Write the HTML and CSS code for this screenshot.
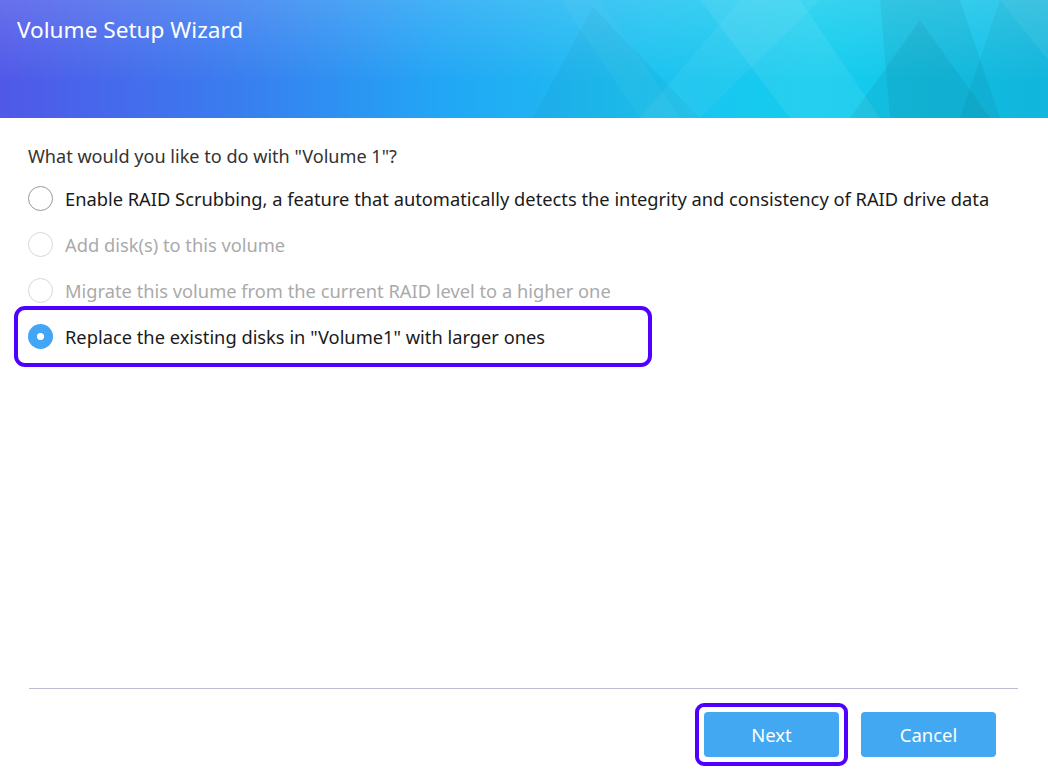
FILE: index.html
```html
<!doctype html>
<html lang="en">
<head>
	<meta charset="utf-8">
	<title>Volume Setup Wizard</title>
	<link rel="stylesheet" href="styles.css">
</head>
<body>
	<div class="wizard">
		<header class="wizard-head">
			<svg class="wizard-pattern" viewBox="0 0 1048 118" preserveAspectRatio="none">
				<polygon points="593,7 533,118 700,118" fill="#000" opacity=".03"/>
				<polygon points="560,0 600,0 680,118 640,118" fill="#fff" opacity=".03"/>
				<polygon points="700,0 800,0 880,118 790,118" fill="#fff" opacity=".07"/>
				<polygon points="740,0 820,0 700,118 640,118" fill="#fff" opacity=".05"/>
				<polygon points="880,0 960,0 1000,118 890,118" fill="#000" opacity=".05"/>
				<polygon points="920,20 850,118 990,118" fill="#000" opacity=".05"/>
				<polygon points="1000,0 1048,0 1048,118 960,118" fill="#000" opacity=".04"/>
				<polygon points="1000,0 1048,60 1048,0" fill="#fff" opacity=".06"/>
			</svg>
			<h1 class="wizard-title">Volume Setup Wizard</h1>
		</header>

		<main class="wizard-body">
			<p class="question">What would you like to do with "Volume 1"?</p>
			<ul class="options">
				<li class="option">
					<span class="radio"></span>
					<span class="option-text">Enable RAID Scrubbing, a feature that automatically detects the integrity and consistency of RAID drive data</span>
				</li>
				<li class="option option-disabled">
					<span class="radio"></span>
					<span class="option-text">Add disk(s) to this volume</span>
				</li>
				<li class="option option-disabled">
					<span class="radio"></span>
					<span class="option-text">Migrate this volume from the current RAID level to a higher one</span>
				</li>
				<li class="option option-checked">
					<span class="radio"></span>
					<span class="option-text">Replace the existing disks in "Volume1" with larger ones</span>
					<span class="mark mark-option"></span>
				</li>
			</ul>
		</main>

		<footer class="wizard-foot">
			<div class="buttons">
				<button class="btn" type="button">Next<span class="mark mark-btn"></span></button>
				<button class="btn" type="button">Cancel</button>
			</div>
		</footer>
	</div>
</body>
</html>
```

FILE: styles.css
```css
* {
	box-sizing: border-box;
}
html, body {
	margin: 0;
	height: 100%;
}
body {
	font-family: "Noto Sans", "Open Sans", sans-serif;
	color: #333;
	background: #fff;
}

.wizard {
	display: flex;
	flex-direction: column;
	min-height: 100vh;
}

/* header */
.wizard-head {
	position: relative;
	height: 118px;
	overflow: hidden;
	background:
		linear-gradient(180deg, rgba(255,255,255,.14) 0%, rgba(255,255,255,0) 70%),
		linear-gradient(90deg, #5058e8 0%, #3a7cef 22%, #22a6f5 42%, #1cc2f0 62%, #14cdee 78%, #12bde6 100%);
}
.wizard-pattern {
	position: absolute;
	left: 0;
	top: 0;
	width: 100%;
	height: 100%;
}
.wizard-title {
	position: relative;
	margin: 0;
	padding: 14px 0 0 17px;
	font-size: 22.6px;
	font-weight: 400;
	color: #fff;
	line-height: 32px;
}

/* body */
.wizard-body {
	flex: 1;
	padding: 26px 28px 0;
}
.question {
	margin: 0 0 6px;
	font-size: 18.1px;
	line-height: 25px;
}
.options {
	list-style: none;
	margin: 0;
	padding: 0;
}
.option {
	position: relative;
	display: flex;
	align-items: center;
	gap: 12px;
	height: 46px;
	font-size: 18.3px;
	color: #1a1a1a;
}
.radio {
	width: 25px;
	height: 25px;
	flex: none;
	border: 1.5px solid #9a9a9a;
	border-radius: 50%;
	background: #fff;
}
.option-disabled {
	color: #aaa;
}
.option-disabled .radio {
	border-color: #d8d8d8;
}
.option-checked .radio {
	border: 0;
	background: radial-gradient(circle, #fff 0 3.2px, #42a5f5 4px);
}

/* annotation boxes */
.mark {
	position: absolute;
	border: 4px solid #5000ff;
	pointer-events: none;
}
.mark-option {
	left: -14px;
	top: -7px;
	width: 638px;
	height: 61px;
	border-radius: 11px;
}
.mark-btn {
	left: -9px;
	top: -9px;
	right: -9px;
	bottom: -9px;
	border-radius: 9px;
}

/* footer */
.wizard-foot {
	margin: 0 30px 0 29px;
	border-top: 1px solid #bdbdd2;
	padding: 23px 22px 21px 0;
}
.buttons {
	display: flex;
	justify-content: flex-end;
	gap: 22px;
}
.btn {
	position: relative;
	width: 135px;
	height: 45px;
	border: 0;
	border-radius: 4px;
	background: #42a8f2;
	color: #fff;
	font-family: inherit;
	font-size: 18.5px;
}
```
